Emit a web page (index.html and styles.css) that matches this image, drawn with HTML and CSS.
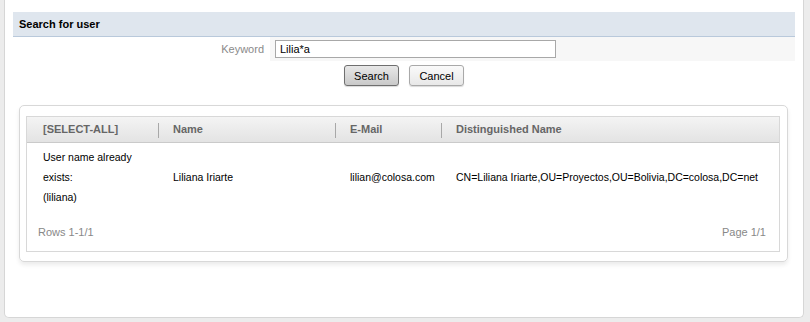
FILE: index.html
```html
<!DOCTYPE html>
<html lang="en">

<head>
    <meta charset="UTF-8">
    <meta name="viewport" content="width=device-width, initial-scale=1.0">
    <title>Search for user</title>
    <link rel="stylesheet" href="styles.css">
</head>

<body>
    <div class="panel">
        <div class="panel-title">Search for user</div>

        <form class="search-form">
            <div class="search-row">
                <label for="keyword-input" class="search-label">Keyword</label>
                <div class="search-field">
                    <input type="text" id="keyword-input" value="Lilia*a" autocomplete="off">
                </div>
            </div>
            <div class="search-buttons">
                <button type="button" class="btn btn-default">Search</button>
                <button type="button" class="btn">Cancel</button>
            </div>
        </form>

        <section class="grid-panel">
            <div class="grid">
                <div class="grid-head">
                    <div class="cell">[SELECT-ALL]</div>
                    <div class="cell">Name</div>
                    <div class="cell">E-Mail</div>
                    <div class="cell">Distinguished Name</div>
                </div>
                <div class="grid-row">
                    <div class="cell">User name already<br>exists:<br>(liliana)</div>
                    <div class="cell cell-middle">Liliana Iriarte</div>
                    <div class="cell cell-middle">lilian@colosa.com</div>
                    <div class="cell cell-middle">CN=Liliana Iriarte,OU=Proyectos,OU=Bolivia,DC=colosa,DC=net</div>
                </div>
                <div class="grid-foot">
                    <span>Rows 1-1/1</span>
                    <span>Page 1/1</span>
                </div>
            </div>
        </section>
    </div>
</body>

</html>
```

FILE: styles.css
```css
*,
::before,
::after {
    margin: 0;
    padding: 0;
    box-sizing: border-box;
}

html,
body {
    font-family: 'Liberation Sans', Arial, sans-serif;
    font-size: 11px;
    color: #000;
    background-color: #ececec;
}

.panel {
    width: 800px;
    height: 318px;
    margin-left: 4px;
    padding: 12px 8px 0;
    border: 1px solid #d6d6d6;
    border-top: none;
    border-radius: 0 0 5px 5px;
    background-color: #fff;
}

.panel-title {
    height: 25px;
    padding-left: 6px;
    line-height: 24px;
    font-weight: bold;
    background-color: #dfe6ee;
    border-bottom: 1px solid #b9c9db;
}

.search-row {
    display: grid;
    grid-template-columns: 257px 1fr;
    height: 24px;
}

.search-label {
    padding-right: 6px;
    line-height: 24px;
    text-align: right;
    color: #8a8a8a;
}

.search-field {
    padding: 3px 0 0 5px;
    background-color: #f7f7f7;
}

.search-field input {
    width: 281px;
    height: 18px;
    padding: 0 4px;
    font-family: inherit;
    font-size: 11px;
    border: 1px solid #a8a8a8;
    background-color: #fff;
    outline: none;
}

.search-buttons {
    display: flex;
    justify-content: center;
    gap: 10px;
    margin-top: 4px;
}

.btn {
    width: 55px;
    height: 21px;
    font-family: inherit;
    font-size: 11px;
    color: #000;
    border: 1px solid #a9a9a9;
    border-radius: 3px;
    background: linear-gradient(#fafafa, #e8e8e8);
    box-shadow: 0 1px 1px rgba(0, 0, 0, .15);
    cursor: pointer;
}

.btn-default {
    border-color: #6f6f6f;
    background: linear-gradient(#e8e8e8, #c9c9c9);
}

.grid-panel {
    margin: 19px 7px 0 6px;
    padding: 10px 7px 9px 6px;
    border: 1px solid #d8d8d8;
    border-radius: 5px;
    box-shadow: 0 3px 4px rgba(0, 0, 0, .08);
}

.grid {
    border: 1px solid #d8d8d8;
}

.grid-head,
.grid-row {
    display: grid;
    grid-template-columns: 131px 177px 106px 1fr;
}

.grid-head {
    height: 26px;
    font-weight: bold;
    color: #666;
    background: linear-gradient(#f4f4f4, #e3e3e3);
    border-bottom: 1px solid #cacaca;
}

.grid-head .cell {
    position: relative;
    padding-left: 15px;
    line-height: 25px;
}

.grid-head .cell:first-child {
    padding-left: 16px;
}

.grid-head .cell:not(:first-child)::before {
    content: '';
    position: absolute;
    left: 0;
    top: 6px;
    height: 15px;
    border-left: 1px solid #a8a8a8;
}

.grid-row {
    padding: 4px 0 8px;
    font-size: 10.5px;
}

.grid-row .cell {
    padding-left: 15px;
    line-height: 20px;
}

.grid-row .cell:first-child {
    padding-left: 16px;
}

.cell-middle {
    align-self: center;
}

.grid-foot {
    display: flex;
    justify-content: space-between;
    height: 36px;
    padding: 0 13px 0 11px;
    line-height: 34px;
    color: #888;
}
```
